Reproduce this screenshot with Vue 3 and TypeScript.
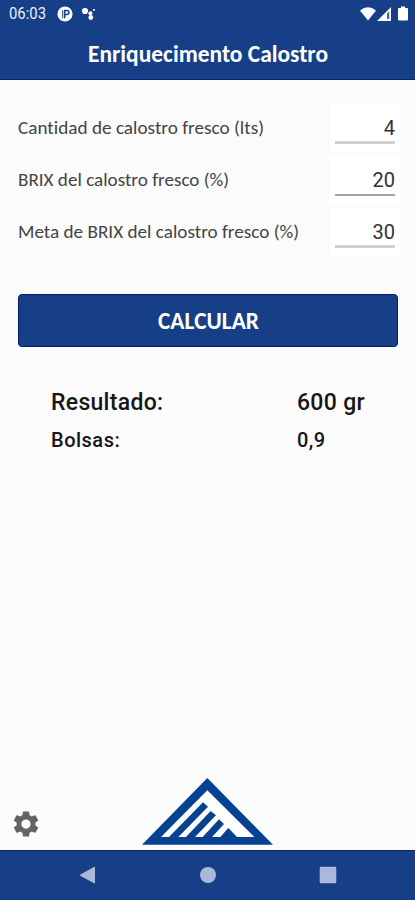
<script setup lang="ts">
import { computed, ref } from 'vue'

interface Field {
  id: string
  label: string
  value: string
  tone: string
  width: number
}

const fields = ref<Field[]>([
  { id: 'litros', label: 'Cantidad de calostro fresco (lts)', value: '4', tone: 'soft', width: 246 },
  { id: 'brix', label: 'BRIX del calostro fresco (%)', value: '20', tone: 'fine', width: 211 },
  { id: 'meta', label: 'Meta de BRIX del calostro fresco (%)', value: '30', tone: 'soft', width: 281 },
])

const grams = ref(600)
const bags = ref(0.9)
const bagsText = computed(() => bags.value.toFixed(1).replace('.', ','))
</script>

<template>
  <div class="screen">
    <header class="top">
      <div class="status">
        <svg class="clock" viewBox="0 0 48 27"><text x="0" y="19" textLength="37" lengthAdjust="spacingAndGlyphs">06:03</text></svg>
        <svg class="app-dot" viewBox="0 0 16 16"><circle cx="8" cy="8" r="7.6" fill="#fff" /><path d="M5.6 12.3V4.3" fill="none" stroke="#4969a5" stroke-width="1.3" /><path d="M7.7 12.3V4.6H9.9A1.9 1.9 0 0 1 9.9 8.6H8" fill="none" stroke="#173f88" stroke-width="1.5" /></svg>
        <svg class="assistant" viewBox="0 0 16 16" fill="#fff"><circle cx="4" cy="5" r="3.1" /><circle cx="9.4" cy="7.3" r="2" /><circle cx="9.8" cy="11.5" r="2.4" /><circle cx="13" cy="4" r="1.1" /></svg>
        <span class="grow"></span>
        <svg class="wifi" viewBox="0 0 16 14" fill="#fff"><path d="M0 3.5Q8-3 16 3.5L8 13.5Z" /></svg>
        <svg class="signal" viewBox="0 0 14 14"><path d="M0 14L14 0V14Z" fill="#fff" /><path d="M10 6.5L12.2 4.3V12H10Z" fill="#46649f" /></svg>
        <svg class="battery" viewBox="0 0 10 14" fill="#fff"><path d="M3 0H7V1.5H9Q10 1.5 10 2.5V13Q10 14 9 14H1Q0 14 0 13V2.5Q0 1.5 1 1.5H3Z" /></svg>
      </div>
      <h1 class="title">
        <svg class="fit" viewBox="0 0 260 36"><text x="10" y="25" textLength="240" lengthAdjust="spacingAndGlyphs">Enriquecimento Calostro</text></svg>
      </h1>
    </header>

    <main class="body">
      <div class="fields">
        <div v-for="f in fields" :key="f.id" class="field">
          <svg class="label" viewBox="0 0 290 30"><text x="0" y="20" :textLength="f.width" lengthAdjust="spacingAndGlyphs">{{ f.label }}</text></svg>
          <div class="entry"><div class="value" :class="f.tone">{{ f.value }}</div></div>
        </div>
      </div>
      <button class="calc" type="button">
        <svg class="calc-text" viewBox="0 0 124 38"><text x="12" y="27" textLength="101" lengthAdjust="spacingAndGlyphs">CALCULAR</text></svg>
      </button>
      <div class="results">
        <div class="result main-result"><span class="name">Resultado:</span><span>{{ grams }} gr</span></div>
        <div class="result sub-result"><span class="name">Bolsas:</span><span>{{ bagsText }}</span></div>
      </div>
    </main>

    <footer class="foot">
      <svg class="gear" viewBox="0 0 24 24" fill="#646464"><path d="M19.43 12.98c.04-.32.07-.64.07-.98s-.03-.66-.07-.98l2.11-1.65a.5.5 0 0 0 .12-.64l-2-3.46a.5.5 0 0 0-.61-.22l-2.49 1a7.3 7.3 0 0 0-1.69-.98l-.38-2.65A.49.49 0 0 0 14 2h-4a.49.49 0 0 0-.49.42l-.38 2.65c-.61.25-1.17.59-1.69.98l-2.49-1a.49.49 0 0 0-.61.22l-2 3.46a.49.49 0 0 0 .12.64l2.11 1.65c-.04.32-.07.65-.07.98s.03.66.07.98l-2.11 1.65a.5.5 0 0 0-.12.64l2 3.46c.12.22.39.3.61.22l2.49-1c.52.4 1.08.73 1.69.98l.38 2.65c.03.24.24.42.49.42h4c.25 0 .46-.18.49-.42l.38-2.65c.61-.25 1.17-.59 1.69-.98l2.49 1c.23.09.49 0 .61-.22l2-3.46a.5.5 0 0 0-.12-.64ZM12 15.7a3.7 3.7 0 1 1 0-7.4 3.7 3.7 0 0 1 0 7.4Z" /></svg>
      <svg class="logo" viewBox="36 39 393 201">
        <path d="M232 39L429 239H36Z" fill="#06428f" />
        <path d="M232 76L373 216H93Z" fill="#fdfdfd" />
        <path d="M117 216L219 112L234 125L145 216ZM168 216L242 138L258 151L195 216ZM218 216L267 163L282 177L246 216ZM271 216L295 189L321 216Z" fill="#06428f" />
      </svg>
    </footer>

    <nav class="nav">
      <svg viewBox="0 0 18 18"><path d="M1.2 9.2L15.5 1.2V17Z" fill="#aab9d9" stroke="#aab9d9" stroke-width="1" stroke-linejoin="round" /></svg>
      <svg viewBox="0 0 18 18"><circle cx="9" cy="9" r="8" fill="#aab9d9" /></svg>
      <svg viewBox="0 0 18 18"><rect x=".7" y=".7" width="16.6" height="16.6" rx="1.3" fill="#aab9d9" /></svg>
    </nav>
  </div>
</template>

<style>
body { margin: 0; background: #fbfbfb; }
</style>

<style scoped>
.screen { width: 415px; height: 900px; display: flex; flex-direction: column; background: #fbfbfb; font-family: Roboto, sans-serif; color: #161616; overflow: hidden; }
.top { height: 80px; box-sizing: border-box; background: #173f88; border-bottom: 1px solid #052370; flex: none; }
.status { height: 27px; display: flex; align-items: center; padding: 0 7px 0 9px; color: #e9edf7; }
.clock { width: 48px; height: 27px; }
.clock text { font: 400 16px Roboto, sans-serif; fill: #e9edf7; }
.app-dot { width: 16px; height: 16px; }
.assistant { width: 16px; height: 16px; margin-left: 8px; }
.grow { flex: 1; }
.wifi { width: 16px; height: 14px; }
.signal { width: 14px; height: 14px; margin-left: 1px; }
.battery { width: 10px; height: 15px; margin-left: 7px; }
.title { margin: 10px 0 0 78px; height: 36px; }
.fit { display: block; width: 260px; height: 36px; }
.fit text, .calc-text text { font: 700 23.5px Calibri, Carlito, Lato, sans-serif; fill: #fff; }
.body { flex: 1; padding: 24px 17px 0 18px; }
.fields { display: flex; flex-direction: column; gap: 2px; }
.field { height: 50px; display: flex; justify-content: space-between; }
.label { width: 290px; height: 30px; margin-top: 10px; }
.label text { font: 400 19px Calibri, Carlito, Lato, sans-serif; font-variant-ligatures: none; fill: #444; }
.entry { width: 70px; height: 48px; background: #fff; padding: 0 5px; box-sizing: border-box; margin-right: -2px; }
.value { height: 40px; box-sizing: border-box; text-align: right; font-size: 20px; line-height: 49px; color: #333; }
.soft { border-bottom: 3px solid #d0d0d0; }
.fine { border-bottom: 2px solid #a4a4a4; }
.calc { display: flex; width: 380px; height: 53px; margin: 36px 0 0; padding: 0; align-items: center; justify-content: center; background: #173f88; border: 1px solid #06197b; border-radius: 4px; }
.calc-text { width: 124px; height: 38px; }
.results { padding: 36px 0 0 33px; }
.result { display: flex; font-weight: 500; }
.name { width: 246px; }
.main-result { font-size: 23px; line-height: 39px; letter-spacing: 0.3px; }
.sub-result { font-size: 20px; line-height: 37px; letter-spacing: 0.5px; }
.foot { height: 72px; flex: none; display: flex; align-items: flex-start; }
.gear { width: 30px; height: 30px; margin: 31px 0 0 11px; }
.logo { width: 131px; height: 67px; margin-left: 101px; }
.nav { height: 50px; flex: none; box-sizing: border-box; background: #173f88; border-top: 1px solid #052370; padding: 0 0 1px 1px; display: flex; align-items: center; justify-content: center; gap: 102px; }
.nav svg { width: 18px; height: 18px; }
</style>
